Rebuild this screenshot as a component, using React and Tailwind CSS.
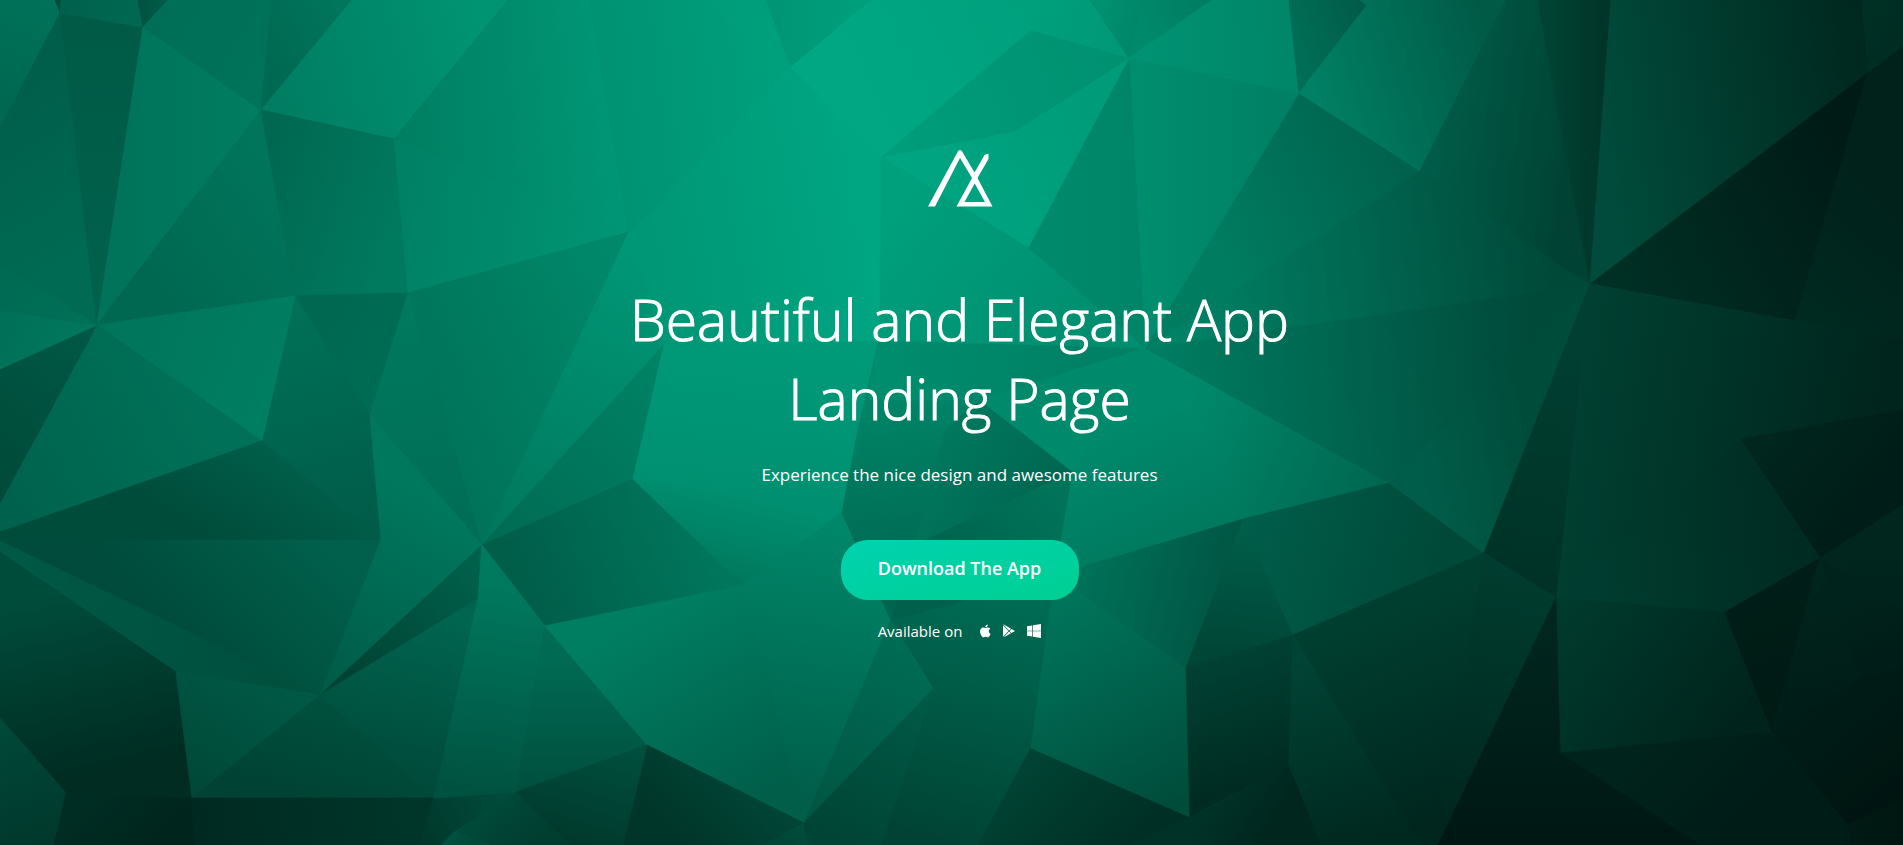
import React from "react";

// Each facet: [points, x1, y1, tone1, x2, y2, tone2]; tone is the green channel at each gradient end.
const FACETS = [
  ["0,0 55,0 60,13 0,128", 40, 0, 114, 0, 110, 103],
  ["0,128 60,13 97,325 0,265", 0, 100, 95, 90, 250, 106],
  ["60,13 143,27 97,325", 100, 20, 90, 100, 320, 98],
  ["55,0 61,0 60,13", 55, 0, 74, 60, 13, 80],
  ["61,0 138,0 143,27 60,13", 60, 0, 97, 140, 20, 104],
  ["138,0 168,0 143,27", 138, 0, 82, 168, 0, 92],
  ["143,27 261,110 97,325", 110, 110, 115, 261, 110, 125],
  ["143,27 168,0 272,0 261,110", 160, 0, 110, 270, 60, 115],
  ["272,0 352,0 261,110", 261, 50, 105, 340, 0, 118],
  ["352,0 508,0 394,139 261,110", 261, 80, 124, 480, 20, 148],
  ["508,0 590,0 629,232 394,139", 400, 120, 126, 610, 100, 150],
  ["261,110 295,296 97,325", 150, 300, 103, 295, 200, 117],
  ["261,110 394,139 408,293 295,296", 261, 150, 103, 408, 200, 122],
  ["394,139 629,232 408,293", 394, 200, 128, 629, 232, 150],
  ["590,0 790,0 790,67 629,232", 590, 100, 145, 780, 80, 160],
  ["408,293 629,232 482,545", 408, 350, 116, 610, 260, 136],
  ["629,232 664,345 482,545", 640, 260, 151, 482, 545, 118],
  ["482,545 664,345 633,479", 650, 360, 130, 490, 540, 107],
  ["482,545 633,479 743,585 545,626", 700, 530, 118, 530, 600, 94],
  ["295,296 408,293 370,415", 295, 296, 102, 400, 350, 108],
  ["295,296 370,415 381,540 262,441", 300, 310, 112, 350, 530, 92],
  ["408,293 482,545 370,415", 400, 300, 122, 440, 520, 110],
  ["97,325 295,296 262,441", 97, 325, 116, 262, 400, 126],
  ["97,325 262,441 0,532 0,503", 200, 400, 113, 0, 510, 97],
  ["97,325 0,503 0,369", 90, 330, 89, 0, 450, 76],
  ["0,310 97,325 0,369", 0, 310, 111, 60, 340, 118],
  ["0,265 97,325 0,310", 0, 280, 106, 80, 320, 112],
  ["0,532 262,441 381,540 0,540", 280, 450, 95, 220, 545, 76],
  ["0,540 381,540 320,695", 320, 540, 96, 200, 660, 75],
  ["0,541 320,695 176,672 0,552", 20, 550, 88, 260, 690, 80],
  ["0,552 176,672 192,798 66,793 0,718", 70, 590, 76, 110, 770, 44],
  ["0,718 66,793 54,845 0,845", 0, 730, 72, 40, 845, 56],
  ["66,793 192,798 195,845 54,845", 100, 790, 45, 150, 845, 37],
  ["176,672 320,695 192,798", 270, 680, 89, 200, 790, 72],
  ["320,695 434,798 192,798", 320, 700, 80, 290, 798, 66],
  ["192,798 434,798 420,845 195,845", 420, 800, 54, 200, 840, 42],
  ["434,798 516,792 454,832 440,845 420,845", 500, 795, 75, 430, 840, 57],
  ["516,792 570,845 440,845 454,832", 490, 800, 74, 530, 845, 62],
  ["454,832 490,845 443,845", 454, 832, 82, 470, 845, 74],
  ["381,540 370,415 482,545 320,695", 430, 500, 120, 330, 680, 92],
  ["482,545 478,599 320,695", 480, 560, 98, 350, 680, 66],
  ["478,599 434,798 320,695", 460, 620, 101, 420, 785, 74],
  ["482,545 545,626 516,792 434,798 478,599", 500, 580, 122, 470, 790, 82],
  ["545,626 647,745 516,792", 560, 660, 106, 560, 785, 80],
  ["545,626 743,585 804,823 647,745", 660, 610, 126, 760, 800, 94],
  ["647,745 804,823 780,845 623,845", 740, 780, 68, 680, 845, 53],
  ["647,745 623,845 570,845 516,792", 620, 750, 78, 590, 845, 58],
  ["804,823 808,845 762,845", 804, 823, 78, 790, 845, 70],
  ["633,479 842,513 743,585", 760, 500, 143, 740, 580, 121],
  ["664,345 879,340 858,430 842,513 633,479", 760, 345, 154, 740, 510, 143],
  ["743,585 842,513 891,620 804,823", 840, 530, 134, 800, 800, 94],
  ["891,620 934,688 804,823", 900, 640, 108, 820, 810, 86],
  ["804,823 934,688 882,845 808,845", 920, 700, 90, 850, 845, 68],
  ["891,620 1055,575 1031,748 978,845 882,845 934,688", 990, 590, 108, 930, 845, 66],
  ["1031,748 1190,817 1130,845 978,845", 1040, 760, 66, 1120, 845, 48],
  ["1055,575 1186,668 1190,817 1031,748", 1070, 600, 116, 1180, 800, 76],
  ["879,340 1145,348 1073,472 1062,575 891,620 842,513 858,430", 930, 370, 136, 960, 590, 101],
  ["879,340 1145,348 980,400 868,400", 880, 350, 141, 1100, 360, 128],
  ["980,400 945,430 915,545 1073,472", 950, 430, 120, 1050, 500, 102],
  ["980,400 1145,348 1073,472", 1000, 400, 138, 1110, 400, 138],
  ["1073,472 915,545 891,620 1062,575", 1060, 490, 116, 940, 590, 96],
  ["1145,348 1243,519 1055,575 1073,472", 1120, 420, 138, 1180, 550, 120],
  ["1055,575 1243,519 1186,668", 1080, 570, 114, 1230, 610, 84],
  ["1243,519 1293,635 1186,668", 1240, 530, 94, 1230, 650, 70],
  ["1186,668 1293,635 1289,765 1190,817", 1220, 660, 65, 1260, 780, 43],
  ["1190,817 1289,765 1322,845 1130,845", 1210, 810, 50, 1260, 845, 38],
  ["1145,348 1389,483 1243,519", 1180, 400, 138, 1370, 490, 104],
  ["1243,519 1389,483 1484,553 1293,635", 1250, 530, 93, 1440, 590, 72],
  ["1389,483 1590,284 1484,553", 1420, 460, 93, 1530, 440, 76],
  ["1145,348 1590,284 1389,483", 1160, 350, 125, 1530, 330, 74],
  ["1145,348 1420,171 1590,284", 1200, 330, 128, 1560, 285, 72],
  ["1299,93 1420,171 1145,348", 1220, 250, 124, 1410, 175, 97],
  ["1129,58 1299,93 1145,348", 1140, 130, 142, 1280, 130, 128],
  ["1129,58 1145,348 1028,248", 1040, 220, 138, 1150, 220, 132],
  ["1129,58 1028,248 881,157 1015,131", 940, 170, 164, 1110, 100, 155],
  ["881,157 1028,248 1145,348 879,340", 900, 200, 160, 1080, 340, 142],
  ["1031,30 1129,58 1015,131 881,157", 900, 150, 157, 1110, 60, 145],
  ["790,67 870,0 1025,0 1031,30 881,157 760,150", 860, 90, 167, 1030, 10, 160],
  ["765,0 870,0 790,67", 770, 0, 149, 850, 10, 158],
  ["700,0 765,0 790,67", 700, 0, 156, 780, 50, 160],
  ["790,67 881,157 879,340 664,345 629,232", 650, 240, 151, 860, 200, 165],
  ["1025,0 1090,0 1129,58 1031,30", 1030, 10, 160, 1120, 50, 152],
  ["1090,0 1142,0 1129,58", 1100, 0, 145, 1140, 10, 135],
  ["1142,0 1212,0 1129,58", 1140, 30, 138, 1200, 0, 124],
  ["1212,0 1289,0 1299,93 1129,58", 1150, 50, 146, 1290, 40, 134],
  ["1289,0 1360,0 1367,5 1299,93", 1290, 30, 110, 1360, 5, 92],
  ["1360,0 1506,0 1420,171 1299,93 1367,5", 1310, 95, 129, 1490, 40, 90],
  ["1506,0 1538,0 1590,284 1420,171", 1430, 160, 92, 1570, 180, 66],
  ["1538,0 1611,0 1590,284", 1550, 80, 66, 1605, 80, 53],
  ["1611,0 1862,0 1868,73 1590,284", 1600, 100, 75, 1860, 60, 40],
  ["1862,0 1903,0 1903,47 1868,73", 1862, 10, 48, 1903, 30, 44],
  ["1868,73 1590,284 1795,321", 1610, 285, 48, 1850, 170, 27],
  ["1868,73 1903,47 1903,340 1795,321", 1800, 300, 41, 1890, 200, 34],
  ["1868,73 1903,47 1903,76", 1868, 60, 34, 1903, 76, 34],
  ["1590,284 1795,321 1903,340 1903,410 1740,439 1556,598", 1590, 350, 63, 1880, 400, 37],
  ["1590,284 1556,598 1484,553", 1580, 330, 64, 1530, 580, 50],
  ["1740,439 1903,410 1903,505 1820,558", 1760, 450, 38, 1850, 520, 29],
  ["1740,439 1820,558 1725,612 1556,598", 1600, 560, 60, 1800, 540, 43],
  ["1556,598 1725,612 1772,732 1560,753", 1570, 610, 58, 1730, 730, 36],
  ["1725,612 1820,558 1772,732", 1740, 600, 30, 1780, 700, 26],
  ["1820,558 1903,505 1903,668 1772,732", 1830, 560, 38, 1850, 690, 30],
  ["1820,558 1903,612 1903,668 1860,680", 1850, 590, 36, 1880, 660, 29],
  ["1772,732 1860,678 1903,668 1903,845 1847,825", 1800, 720, 28, 1880, 820, 20],
  ["1847,825 1903,800 1903,845 1850,845", 1850, 825, 26, 1900, 840, 22],
  ["1560,753 1772,732 1847,825 1850,845 1665,845", 1620, 750, 36, 1720, 845, 28],
  ["1293,635 1484,553 1470,845 1420,845", 1350, 630, 62, 1430, 820, 38],
  ["1484,553 1556,598 1438,845", 1500, 570, 60, 1450, 830, 38],
  ["1556,598 1560,753 1700,845 1438,845", 1540, 640, 38, 1540, 830, 24],
  ["1293,635 1420,845 1322,845 1289,765", 1300, 660, 68, 1360, 845, 40],
];

const tone = (g) => `rgb(0, ${g}, ${Math.round(g * 0.78)})`;

function Backdrop() {
  return (
    <svg
      className="absolute inset-0 h-full w-full"
      viewBox="0 0 1903 845"
      preserveAspectRatio="xMidYMid slice"
      aria-hidden="true"
    >
      <defs>
        {FACETS.map(([, x1, y1, a, x2, y2, b], i) => (
          <linearGradient key={i} id={`facet-${i}`} gradientUnits="userSpaceOnUse" x1={x1} y1={y1} x2={x2} y2={y2}>
            <stop offset="0" stopColor={tone(a)} />
            <stop offset="1" stopColor={tone(b)} />
          </linearGradient>
        ))}
      </defs>
      {FACETS.map(([points], i) => (
        <polygon key={i} points={points} fill={`url(#facet-${i})`} stroke={`url(#facet-${i})`} strokeWidth="0.8" />
      ))}
    </svg>
  );
}

function Logo() {
  return (
    <svg width="66" height="58" viewBox="0 0 66 58" fill="#fff" role="img" aria-label="Logo">
      <path
        fillRule="evenodd"
        d="M1 57.500L31.300 1.800Q33 0 34.700 1.800L47.500 23.500L57.500 6L61.500 4.500V10L50.500 29L65.500 57.500H29.500L45 29L33 9L8 57.500zM47.700 34.500L37.500 53H58z"
      />
    </svg>
  );
}

function AppleIcon() {
  return (
    <svg width="13" height="14" viewBox="0 20 376 410" fill="#fff" aria-hidden="true">
      <path d="M314 234c-1-48 39-71 41-72-22-33-57-37-69-38-30-3-57 17-72 17s-38-17-62-16c-32 0-61 18-78 47-33 58-8 143 24 190 16 23 35 48 60 47 24-1 33-15 62-15s37 15 62 15c26 0 42-23 58-46 18-27 26-53 26-54-1-1-51-20-52-75zM266 92c13-16 22-38 20-60-19 1-42 13-56 28-12 14-23 37-20 58 21 2 43-10 56-26z" />
    </svg>
  );
}

function PlayIcon() {
  return (
    <svg width="12" height="14" viewBox="0 0 12 14" fill="#fff" aria-hidden="true">
      <path d="M0.300 0.500L6 6.600L8 4.700L0.800 0.500zM0 1.200V12.800L5.500 7zM6 7.400L0.500 13.400L8 9.300zM8.500 5L6.600 7L8.500 9L12 7z" />
    </svg>
  );
}

function WindowsIcon() {
  return (
    <svg width="14" height="14" viewBox="0 0 14 14" fill="#fff" aria-hidden="true">
      <path d="M0 2.200L5.300 1.400V6.700H0zM6 1.300L14 0V6.700H6zM0 7.300H5.300V12.600L0 11.800zM6 7.300H14V14L6 12.700z" />
    </svg>
  );
}

export default function App() {
  return (
    <main className="relative min-h-screen overflow-hidden bg-[#00513f] font-['Open_Sans','Noto_Sans',sans-serif] text-white">
      <Backdrop />
      <section className="relative flex flex-col items-center pt-[149px] pl-4 text-center">
        <Logo />
        <h1 className="mt-[73px] max-w-[760px] text-[57px] leading-[79px] font-light [-webkit-text-stroke:1px_white]">
          Beautiful and Elegant App Landing Page
        </h1>
        <p className="mt-[21px] text-[17px] leading-8">Experience the nice design and awesome features</p>
        <button
          type="button"
          className="mt-[49px] h-[60px] min-w-[238px] rounded-[27px] bg-linear-165 from-[#00d2b0] to-[#00cf92] px-8 pb-1 text-lg font-semibold"
        >
          Download The App
        </button>
        <div className="mt-[19px] flex items-center gap-3 text-[15px] leading-6">
          <span className="mr-1">Available on</span>
          <AppleIcon />
          <PlayIcon />
          <WindowsIcon />
        </div>
      </section>
    </main>
  );
}
